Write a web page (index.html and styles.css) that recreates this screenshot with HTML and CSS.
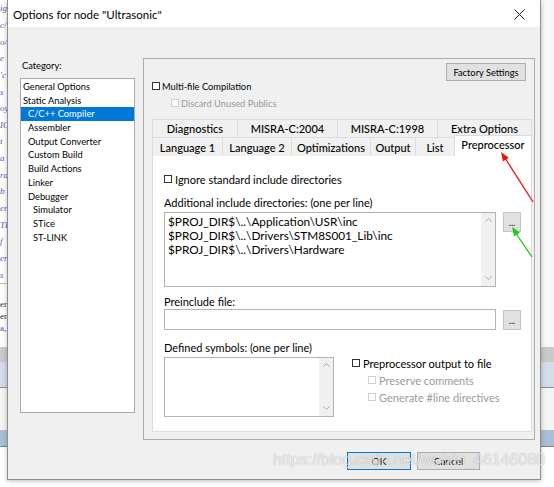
FILE: index.html
```html
<!DOCTYPE html>
<html lang="en">

<head>
  <meta charset="UTF-8">
  <title>Options for node "Ultrasonic"</title>
  <link rel="stylesheet" href="styles.css">
</head>

<body>
  <div class="desk">
    <div class="strip left">
      <div class="code">
        <i>ig</i><i>c/</i><i>o/</i><i>e</i><i>'c</i><i>s</i><i>oy</i><i>IC</i><i>t</i><i>a</i><i>ra</i><i>b</i><i>er</i><i>TE</i><i>f</i><i>er</i><i>s</i>
      </div>
      <div class="gline"></div>
      <div class="dark">er<br>er<br><span>a,</span></div>
      <div class="bar grey"></div>
      <div class="bar pale"></div>
      <div class="bar white"></div>
      <div class="bar blue"></div>
      <div class="bar rest"></div>
    </div>

    <div class="dialog">
      <div class="titlebar">
        <span class="title">Options for node "Ultrasonic"</span>
        <svg class="close" width="11" height="11" viewBox="0 0 11 11"><path d="M0.5 0.5 L10.5 10.5 M10.5 0.5 L0.5 10.5" stroke="#222" stroke-width="1"/></svg>
      </div>

      <div class="dlg-body">
        <div class="main">
          <div class="category">
            <div class="cat-label">Category:</div>
            <ul class="cat-list">
              <li>General Options</li>
              <li>Static Analysis</li>
              <li class="sub sel">C/C++ Compiler</li>
              <li class="sub">Assembler</li>
              <li class="sub">Output Converter</li>
              <li class="sub">Custom Build</li>
              <li class="sub">Build Actions</li>
              <li class="sub">Linker</li>
              <li class="sub">Debugger</li>
              <li class="sub2">Simulator</li>
              <li class="sub2">STice</li>
              <li class="sub2">ST-LINK</li>
            </ul>
          </div>

          <div class="frame">
            <div class="frame-top">
              <div class="opts">
                <div class="chk"><span class="box"></span>Multi-file Compilation</div>
                <div class="chk off indent"><span class="box"></span>Discard Unused Publics</div>
              </div>
              <div class="btn factory">Factory Settings</div>
            </div>

            <div class="tab-row back">
              <div class="tab">Diagnostics</div>
              <div class="tab">MISRA-C:2004</div>
              <div class="tab">MISRA-C:1998</div>
              <div class="tab">Extra Options</div>
            </div>
            <div class="tab-row front">
              <div class="tab">Language 1</div>
              <div class="tab">Language 2</div>
              <div class="tab">Optimizations</div>
              <div class="tab">Output</div>
              <div class="tab">List</div>
              <div class="tab active">Preprocessor</div>
            </div>

            <div class="page">
              <div class="chk first"><span class="box"></span>Ignore standard include directories</div>
              <div class="lbl">Additional include directories: (one per line)</div>
              <div class="field-row">
                <div class="area big">
                  <div class="lines">
                    <div>$PROJ_DIR$\..\Application\USR\inc</div>
                    <div>$PROJ_DIR$\..\Drivers\STM8S001_Lib\inc</div>
                    <div>$PROJ_DIR$\..\Drivers\Hardware</div>
                  </div>
                  <div class="vscroll">
                    <svg width="7" height="4" viewBox="0 0 7 4"><path d="M0.5 3.5 L3.5 0.5 L6.5 3.5" fill="none" stroke="#a6a6a6"/></svg>
                    <svg width="7" height="4" viewBox="0 0 7 4"><path d="M0.5 0.5 L3.5 3.5 L6.5 0.5" fill="none" stroke="#a6a6a6"/></svg>
                  </div>
                </div>
                <div class="btn dots">...</div>
              </div>

              <div class="lbl pre">Preinclude file:</div>
              <div class="field-row">
                <div class="input"></div>
                <div class="btn dots low">...</div>
              </div>

              <div class="lbl defs">Defined symbols: (one per line)</div>
              <div class="bottom-row">
                <div class="area small">
                  <div class="lines"></div>
                  <div class="vscroll">
                    <svg width="7" height="4" viewBox="0 0 7 4"><path d="M0.5 3.5 L3.5 0.5 L6.5 3.5" fill="none" stroke="#a6a6a6"/></svg>
                    <svg width="7" height="4" viewBox="0 0 7 4"><path d="M0.5 0.5 L3.5 3.5 L6.5 0.5" fill="none" stroke="#a6a6a6"/></svg>
                  </div>
                </div>
                <div class="pp-opts">
                  <div class="chk"><span class="box"></span>Preprocessor output to file</div>
                  <div class="chk off indent"><span class="box"></span>Preserve comments</div>
                  <div class="chk off indent"><span class="box"></span>Generate #line directives</div>
                </div>
              </div>
            </div>
          </div>
        </div>

        <div class="actions">
          <div class="btn ok">OK</div>
          <div class="btn">Cancel</div>
        </div>
      </div>
    </div>

    <div class="strip right">
      <div class="light"></div>
      <div class="bar grey"></div>
      <div class="bar pale"></div>
      <div class="bar white"></div>
      <div class="bar blue"></div>
      <div class="bar rest"></div>
    </div>

    <!-- annotations drawn on top of the screenshot -->
    <svg class="annot" width="554" height="487" viewBox="0 0 554 487">
      <line x1="533" y1="202" x2="505" y2="158" stroke="#f01010" stroke-width="1.3"/>
      <polygon points="501,152 508.8,157.7 503,161.5" fill="#f01010"/>
      <line x1="532" y1="257" x2="515" y2="232" stroke="#1ec81e" stroke-width="1.3"/>
      <polygon points="512,227 519.9,232.6 514.1,236.4" fill="#1ec81e"/>
    </svg>
    <div class="watermark">https://blog.csdn.net/weixin_46146080</div>
  </div>
</body>

</html>
```

FILE: styles.css
```css
* {
  margin: 0;
  padding: 0;
  box-sizing: border-box;
}
body {
  width: 554px;
  height: 487px;
  overflow: hidden;
  background: #fff;
  font-family: Lato, "Liberation Sans", sans-serif;
  font-size: 11px;
  color: #000;
}
.desk {
  position: relative;
  display: flex;
  width: 554px;
  height: 487px;
}

/* bits of the window behind the dialog */
.strip {
  height: 487px;
  display: flex;
  flex-direction: column;
  overflow: hidden;
}
.strip.left {
  width: 7px;
}
.strip.right {
  width: 13px;
  background: #fafafa;
}
.code {
  height: 283px;
  display: flex;
  flex-direction: column;
  justify-content: space-around;
  font-family: "Liberation Serif", serif;
  font-size: 9px;
  line-height: 10px;
  color: #5a5ab4;
  background: #fff;
}
.code i {
  display: block;
  white-space: nowrap;
}
.gline {
  height: 1px;
  background: #9ccf9c;
}
.dark {
  height: 63px;
  padding-top: 14px;
  font-family: "Liberation Serif", serif;
  font-size: 9px;
  line-height: 12px;
  color: #333;
  background: #fff;
}
.dark span {
  color: #2b5aa8;
}
.right .light {
  height: 347px;
  background: #f7f7f7;
}
.bar.grey {
  height: 15px;
  background: #c9c9c9;
}
.bar.pale {
  height: 26px;
  background: #d3dce8;
  border-bottom: 1px solid #8a8f99;
}
.bar.white {
  height: 42px;
  background: #f4f4f4;
}
.bar.blue {
  height: 17px;
  background: #a9bfd9;
  border-bottom: 1px solid #7d8592;
}
.bar.rest {
  flex: 1;
  background: #fff;
}

/* dialog */
.dialog {
  width: 534px;
  height: 480px;
  background: #f0f0f0;
  border: 1px solid #8e8e8e;
  border-top: 0;
  display: flex;
  flex-direction: column;
  box-shadow: 0 1px 5px rgba(0, 0, 0, 0.25);
  z-index: 1;
}
.titlebar {
  height: 27px;
  background: #fff;
  display: flex;
  align-items: center;
  justify-content: space-between;
  padding: 1px 15px 0 5px;
}
.title {
  font-size: 11.5px;
  color: #000;
}
.dlg-body {
  flex: 1;
  padding: 31px 5px 0 12px;
}
.main {
  display: flex;
  gap: 8px;
  height: 382px;
}

.category {
  width: 116px;
  font-size: 9.3px;
}
.cat-label {
  height: 14px;
  line-height: 14px;
  margin: 1px 0 5px 2px;
}
.cat-list {
  list-style: none;
  height: 335px;
  background: #fff;
  border: 1px solid #a9a9a9;
  padding-top: 1px;
}
.cat-list li {
  height: 13.7px;
  line-height: 13.7px;
  padding-left: 2px;
  white-space: nowrap;
}
.cat-list li.sub {
  padding-left: 7px;
}
.cat-list li.sub2 {
  padding-left: 12px;
}
.cat-list li.sel {
  background: #0078d7;
  color: #fff;
}

.frame {
  width: 392px;
  border: 1px solid #acacac;
  padding: 4px 2px 7px 8px;
  display: flex;
  flex-direction: column;
}
.frame-top {
  height: 56px;
  display: flex;
  justify-content: space-between;
  align-items: flex-start;
  font-size: 9.3px;
}
.opts {
  padding-top: 16px;
}
.opts .chk + .chk {
  margin-top: 3px;
}

.chk {
  height: 14px;
  display: flex;
  align-items: center;
  white-space: nowrap;
}
.chk .box {
  width: 8px;
  height: 8px;
  border: 1px solid #333;
  background: #fff;
  margin-right: 3px;
}
.opts .chk .box {
  margin-right: 2px;
}
.chk.off {
  color: #9a9a9a;
}
.chk.off .box {
  border-color: #cfcfcf;
}
.chk.indent {
  margin-left: 16px;
}
.opts .chk.indent {
  margin-left: 19px;
}

.btn {
  display: flex;
  align-items: center;
  justify-content: center;
  background: #e1e1e1;
  border: 1px solid #adadad;
  height: 18px;
  width: 63px;
  font-size: 10px;
}
.btn.factory {
  width: 80px;
  margin-right: 6px;
  font-size: 9.3px;
}
.btn.ok {
  width: 64px;
  border-color: #0078d7;
}

/* tabs */
.tab-row {
  display: grid;
}
.tab-row.back {
  height: 18px;
  grid-template-columns: 85px 100px 100px 95px;
}
.tab-row.front {
  height: 19px;
  grid-template-columns: 70px 69px 79px 45px 39px 78px;
}
.tab {
  display: flex;
  align-items: center;
  justify-content: center;
  font-size: 11px;
  font-weight: 500;
  background: #f0f0f0;
  border-top: 1px solid #dcdcdc;
  border-left: 1px solid #dcdcdc;
  white-space: nowrap;
}
.tab:last-child {
  border-right: 1px solid #dcdcdc;
}
.tab.active {
  background: #fff;
  margin-top: -2px;
  height: 21px;
  padding-bottom: 3px;
}

.page {
  flex: 1;
  background: #fff;
  border: 1px solid #dcdcdc;
  border-top: 0;
  padding: 0 10px 0 11px;
}
.chk.first {
  margin-top: 16px;
}
.lbl {
  height: 14px;
  line-height: 14px;
  margin-top: 10px;
  white-space: nowrap;
}
.lbl.pre {
  margin-top: 8px;
}
.lbl.defs {
  margin-top: 11px;
}
.field-row {
  display: flex;
  align-items: flex-start;
  gap: 7px;
  margin-top: 2px;
}
.lbl.pre + .field-row {
  margin-top: 0;
}
.area {
  display: flex;
  background: #fff;
  border: 1px solid #b4b4b4;
}
.area.big {
  width: 332px;
  height: 75px;
}
.area.small {
  width: 170px;
  height: 60px;
}
.lines {
  flex: 1;
  padding: 2px 0 0 3px;
  font-size: 11.8px;
  line-height: 14px;
  white-space: nowrap;
}
.vscroll {
  width: 14px;
  background: #f0f0f0;
  display: flex;
  flex-direction: column;
  justify-content: space-between;
  align-items: center;
  padding: 5px 0 6px;
}
.input {
  width: 332px;
  height: 21px;
  background: #fff;
  border: 1px solid #b4b4b4;
}
.btn.dots {
  width: 18px;
  height: 20px;
  align-items: flex-end;
  padding-bottom: 4px;
  font-size: 9px;
  line-height: 9px;
  border-color: #c4c4c4;
}
.btn.dots.low {
  margin-top: 1px;
}
.bottom-row {
  display: flex;
  align-items: flex-start;
  margin-top: 2px;
}
.pp-opts {
  margin: -1px 0 0 18px;
}
.pp-opts .chk + .chk {
  margin-top: 3px;
}

.actions {
  display: flex;
  justify-content: flex-end;
  gap: 6px;
  margin-top: 12px;
  padding-right: 55px;
}

/* overlays */
.annot {
  position: absolute;
  left: 0;
  top: 0;
  z-index: 2;
}
.watermark {
  position: absolute;
  left: 273px;
  top: 451px;
  z-index: 3;
  font-family: "Liberation Sans", sans-serif;
  font-size: 16px;
  color: rgba(255, 255, 255, 0.75);
  text-shadow: 0 0 1px rgba(0, 0, 0, 0.35);
  white-space: nowrap;
}
```
